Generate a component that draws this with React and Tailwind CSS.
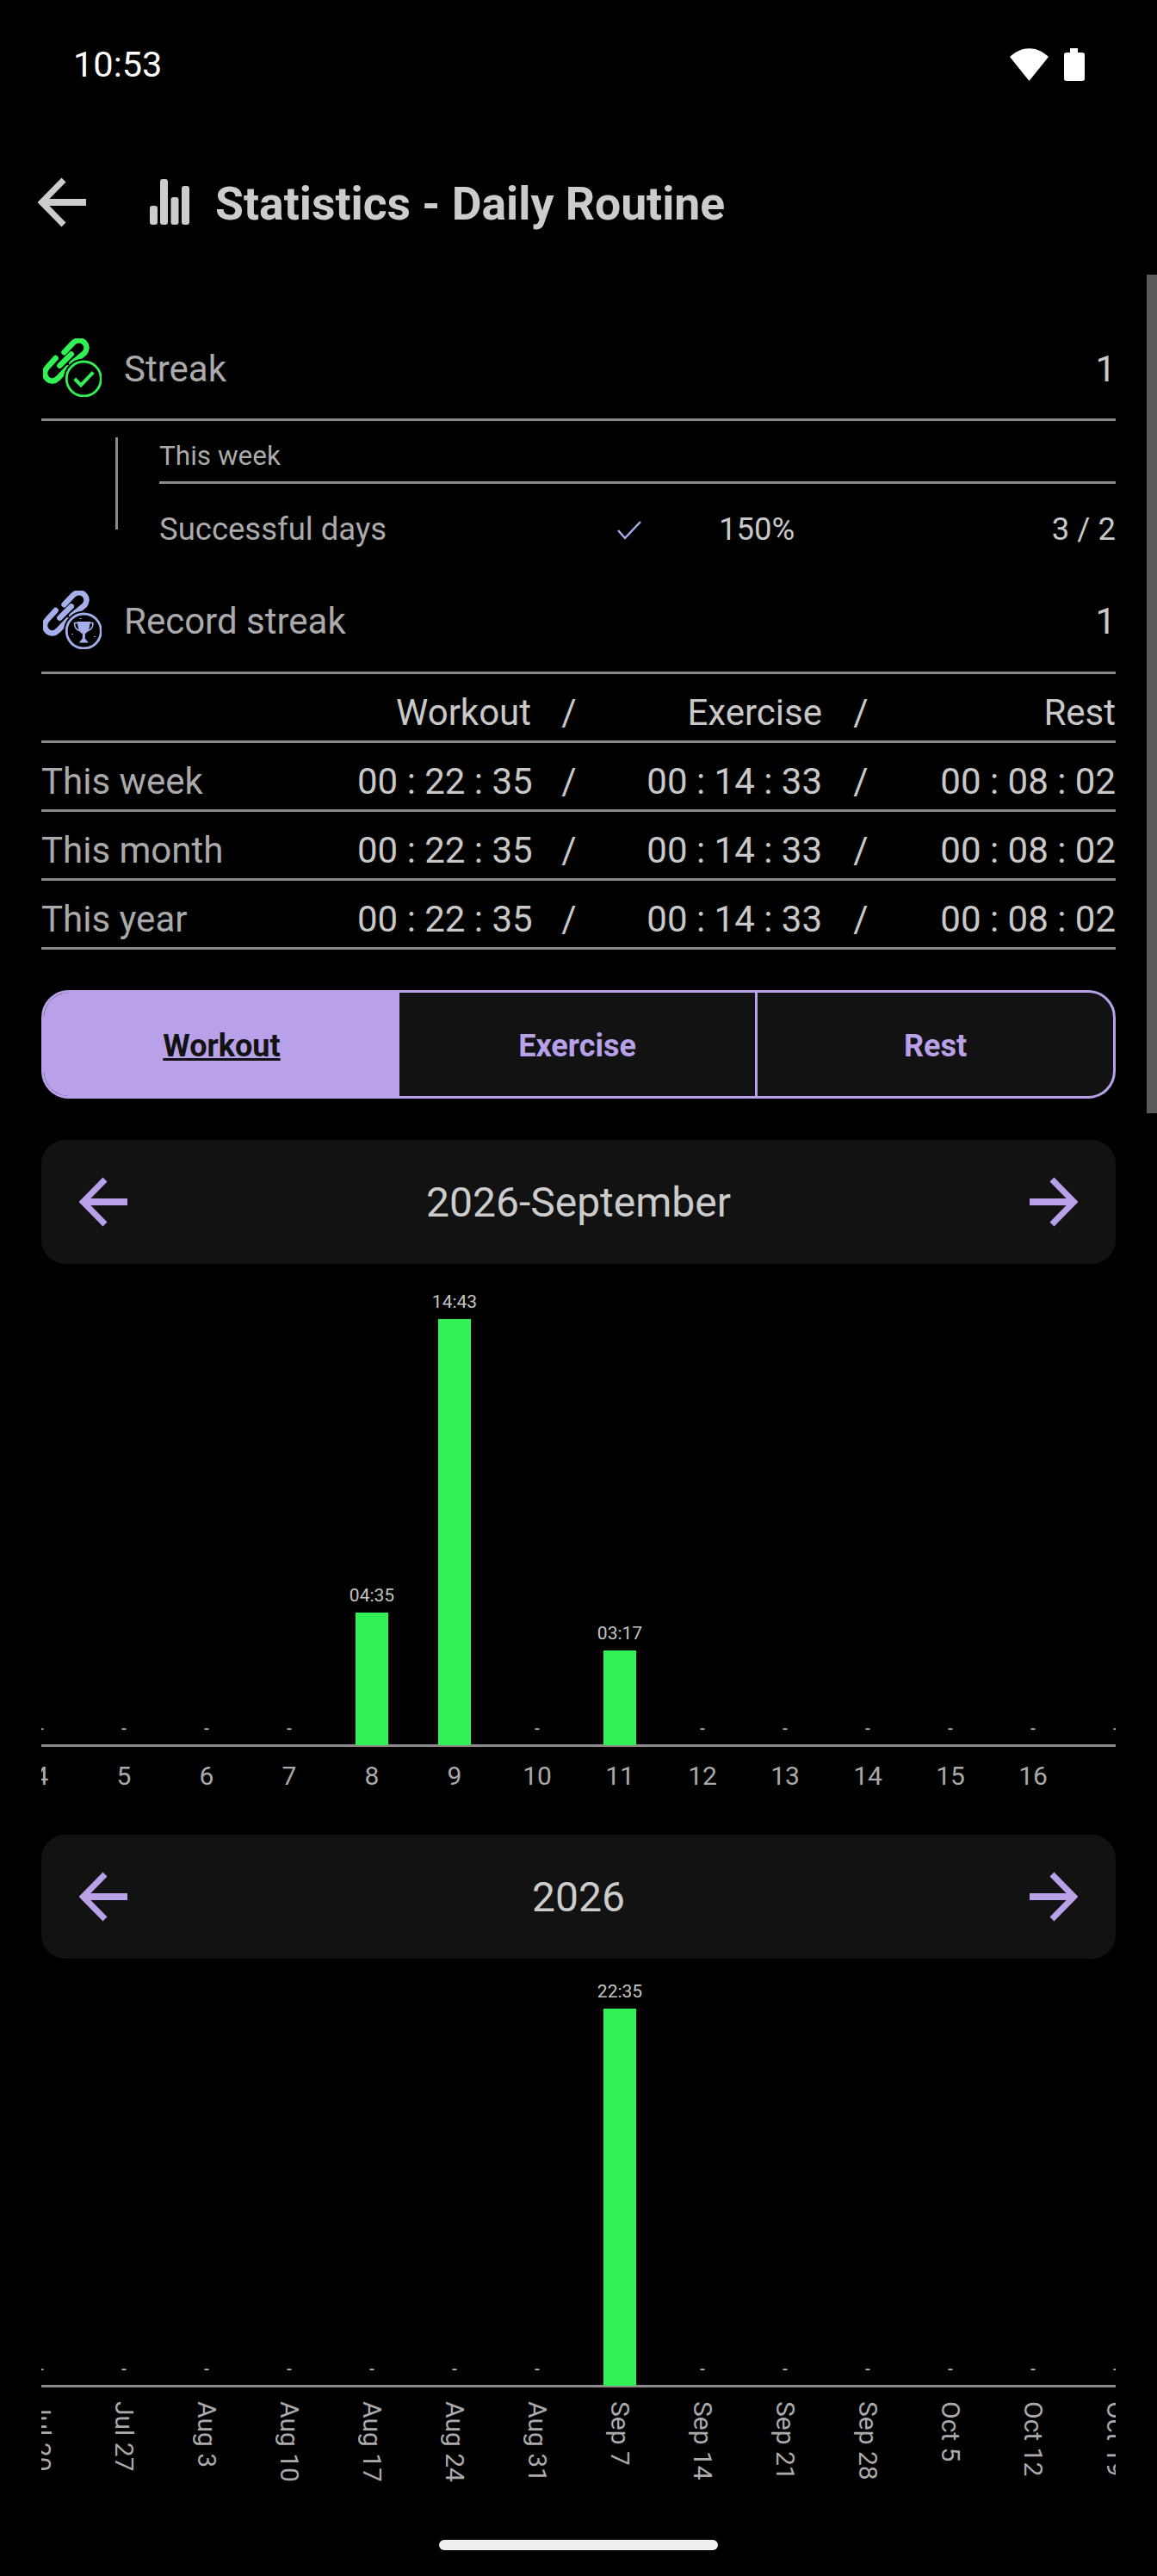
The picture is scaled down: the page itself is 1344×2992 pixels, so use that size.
import React from 'react';

const LINE = 'border-[#8a8a8a]';
const times = ['This week', 'This month', 'This year'];
const days = [
  { x: '4' }, { x: '5' }, { x: '6' }, { x: '7' },
  { x: '8', h: 154, v: '04:35' }, { x: '9', h: 495, v: '14:43' }, { x: '10' },
  { x: '11', h: 110, v: '03:17' }, { x: '12' }, { x: '13' }, { x: '14' }, { x: '15' }, { x: '16' }, { x: '' },
];
const weeks = [
  { x: 'Jul 20' }, { x: 'Jul 27' }, { x: 'Aug 3' }, { x: 'Aug 10' }, { x: 'Aug 17' }, { x: 'Aug 24' }, { x: 'Aug 31' },
  { x: 'Sep 7', h: 438, v: '22:35' }, { x: 'Sep 14' }, { x: 'Sep 21' }, { x: 'Sep 28' }, { x: 'Oct 5' }, { x: 'Oct 12' }, { x: 'Oct 19' },
];

function Arrow({ color, flip }) {
  return (
    <svg width="56" height="58" viewBox="0 0 56 58" className={flip ? 'shrink-0 -scale-x-100' : 'shrink-0'} fill="none" stroke={color} strokeWidth="7">
      <path d="M56 29H6" strokeWidth="8" />
      <path d="M30 3L4.500 29L30 55" />
    </svg>
  );
}

function LinkIcon({ color, children }) {
  return (
    <svg width="68" height="68" viewBox="0 0 68 68" className="shrink-0" fill="none" stroke={color} strokeLinecap="round" strokeLinejoin="round">
      <g transform="translate(-1.500 -3) scale(1.040)" strokeWidth="6.200">
        <path d="M25 18.500L35 8C39 4 45 4.500 48 8C51 11.500 50.500 16 47.500 19.500L33.500 31" />
        <path d="M15.500 25L6 35.500C2 40 3 45.500 6.500 48.500C10 51.500 14.500 51 18 47.500L29 36" />
        <path d="M20 33.500L33 20.500" />
      </g>
      <circle cx="47.300" cy="47" r="20" fill="#000" stroke="#000" strokeWidth="7" />
      <circle cx="47.300" cy="47" r="20" strokeWidth="2.800" />
      {children}
    </svg>
  );
}

function Trophy({ color }) {
  return (
    <g>
      <path d="M39.500 36H55L53.500 44C52.500 48 50 49.500 48.800 50V55.500L52.800 60.500H41.800L45.800 55.500V50C44.500 49.500 42 48 41 44Z" fill={color} stroke="none" />
      <path d="M40 37.500H36.500C36.500 42 38.500 45.500 42.500 46.500M54.500 37.500H58C58 42 56 45.500 52 46.500" strokeWidth="1.600" />
      <path d="M33.500 50.500h1M59.500 53.500h1M43 32.500h1" strokeWidth="1.200" />
    </g>
  );
}

function Nav({ title }) {
  return (
    <div className="flex h-[144px] items-center justify-between rounded-[28px] bg-[#121212] px-[44px]">
      <Arrow color="#b8a1e8" />
      <span className="pt-[2px] text-[48px] text-[#cccccc]">{title}</span>
      <Arrow color="#b8a1e8" flip />
    </div>
  );
}

function Bars({ data, height }) {
  return (
    <div className="overflow-hidden">
      <div className="-ml-[48px] flex items-end" style={{ height }}>
        {data.map((d, i) => (
          <div key={i} className="relative z-10 flex w-[96px] shrink-0 flex-col items-center justify-end">
            <span className="mb-[8px] text-[21px] leading-[24px] text-[#c4c4c4]">{d.v || '-'}</span>
            {d.h && <div className="w-[38px] bg-[#32f155]" style={{ height: d.h }} />}
          </div>
        ))}
      </div>
      <div className="-mt-[1px] h-[3px] bg-[#8a8a8a]" />
    </div>
  );
}

function TimeRow({ label, cells }) {
  return (
    <div className={`grid h-[80px] grid-cols-[367px_202px_88px_250px_90px_1fr] items-center whitespace-nowrap border-b-[3px] pt-[12px] text-[42px] leading-none text-[#c8c8c8] ${LINE}`}>
      <span className="text-[#aaaaaa]">{label}</span>
      <span className="text-right">{cells[0]}</span>
      <span className="text-center">/</span>
      <span className="text-right">{cells[1]}</span>
      <span className="text-center">/</span>
      <span className="text-right">{cells[2]}</span>
    </div>
  );
}

export default function App() {
  return (
    <div className="relative h-[2992px] w-[1344px] overflow-hidden bg-black font-['Roboto',sans-serif]">
      {/* status bar */}
      <div className="flex h-[150px] items-center justify-between pl-[85px] pr-[84px]">
        <span className="text-[41.500px] text-white">10:53</span>
        <div className="flex items-center gap-[18px]">
          <svg width="45" height="38" viewBox="0 0 45 38" fill="#fff"><path d="M22.500 38L0 10C14 -3 31 -3 45 10Z" /></svg>
          <svg width="24" height="38" viewBox="0 0 24 38" fill="#fff"><path d="M7 0H16V5H21C23 5 24 6 24 7.500V35.500C24 37 23 38 21 38H3C1 38 0 37 0 35.500V7.500C0 6 1 5 3 5H7Z" /></svg>
        </div>
      </div>

      {/* header */}
      <div className="flex h-[170px] items-center pl-[44px]">
        <Arrow color="#cccccc" />
        <svg width="46" height="54" viewBox="0 0 46 54" fill="#cccccc" className="ml-[74px] shrink-0">
          <rect x="0" y="31" width="9" height="22" rx="3" />
          <rect x="12" y="0" width="9" height="53" rx="3" />
          <rect x="24.500" y="21" width="9" height="32" rx="3" />
          <rect x="37" y="8" width="9" height="45" rx="3" />
        </svg>
        <h1 className="ml-[30px] pt-[4px] text-[53.500px] font-bold text-[#cccccc]">Statistics - Daily Routine</h1>
      </div>

      {/* content */}
      <div className="px-[48px] pt-[47px]">
        <div className={`flex h-[122px] items-center border-b-[3px] ${LINE}`}>
          <div className="ml-[2px]">
            <LinkIcon color="#32f155">
              <path d="M36.700 47L44 54.300L58.300 39.300" strokeWidth="4" strokeLinecap="butt" strokeLinejoin="miter" />
            </LinkIcon>
          </div>
          <span className="ml-[26px] flex-1 pt-[3px] text-[42px] text-[#aaaaaa]">Streak</span>
          <span className="pt-[3px] text-[42px] text-[#c8c8c8]">1</span>
        </div>

        <div className="flex h-[170px]">
          <div className="ml-[86px] mt-[19px] h-[107px] w-[3px] bg-[#8a8a8a]" />
          <div className="ml-[48px] flex-1">
            <div className={`flex h-[73px] items-center border-b-[3px] pt-[12px] text-[31.500px] text-[#aaaaaa] ${LINE}`}>This week</div>
            <div className="flex h-[97px] items-center pt-[10px] text-[36.500px] text-[#aaaaaa]">
              <span className="w-[532px]">Successful days</span>
              <svg width="28" height="22" viewBox="0 0 28 22" fill="none" stroke="#a5b0ea" strokeWidth="2.500" className="w-[28px] shrink-0">
                <path d="M1 11L9 20L27 1" />
              </svg>
              <span className="ml-[90px] flex-1 text-[#c8c8c8]">150%</span>
              <span className="text-[#c8c8c8]">3 / 2</span>
            </div>
          </div>
        </div>

        <div className={`flex h-[124px] items-center border-b-[3px] ${LINE}`}>
          <div className="ml-[2px]">
            <LinkIcon color="#a5b0ea">
              <Trophy color="#a5b0ea" />
            </LinkIcon>
          </div>
          <span className="ml-[26px] flex-1 pt-[3px] text-[42px] text-[#aaaaaa]">Record streak</span>
          <span className="pt-[3px] text-[42px] text-[#c8c8c8]">1</span>
        </div>

        <TimeRow label="" cells={['Workout', 'Exercise', 'Rest']} />
        {times.map((t) => (
          <TimeRow key={t} label={t} cells={['00 : 22 : 35', '00 : 14 : 33', '00 : 08 : 02']} />
        ))}

        <div className="mt-[47px] flex h-[126px] overflow-hidden rounded-[32px] border-[3px] border-[#b8a1e8] bg-[#121212] text-[36px] font-bold text-[#b8a1e8]">
          <div className="flex flex-1 items-center justify-center bg-[#b8a1e8] pt-[4px] text-[#121212] underline">Workout</div>
          <div className="flex flex-1 items-center justify-center border-r-[3px] border-[#b8a1e8] pt-[4px]">Exercise</div>
          <div className="flex flex-1 items-center justify-center pt-[4px]">Rest</div>
        </div>

        <div className="mt-[48px]">
          <Nav title="2026-September" />
        </div>
        <Bars data={days} height={559} />
        <div className="mt-[16px] h-[36px] overflow-hidden">
          <div className="-ml-[48px] flex">
            {days.map((d, i) => (
              <span key={i} className="w-[96px] shrink-0 text-center text-[30px] leading-[36px] text-[#aaaaaa]">{d.x}</span>
            ))}
          </div>
        </div>

        <div className="mt-[50px]">
          <Nav title="2026" />
        </div>
        <Bars data={weeks} height={496} />
        <div className="mt-[16px] h-[120px] overflow-hidden">
          <div className="-ml-[48px] flex">
            {weeks.map((d, i) => (
              <div key={i} className="flex w-[96px] shrink-0 justify-center">
                <span className="text-[30px] leading-[36px] text-[#aaaaaa] [writing-mode:vertical-rl]">{d.x}</span>
              </div>
            ))}
          </div>
        </div>
      </div>

      {/* scrollbar and gesture pill sit over the page */}
      <div className="absolute right-0 top-[319px] h-[974px] w-[12px] bg-[#5a5a5a]" />
      <div className="absolute left-[510px] top-[2950px] h-[12px] w-[324px] rounded-full bg-[#eeeeee]" />
    </div>
  );
}
